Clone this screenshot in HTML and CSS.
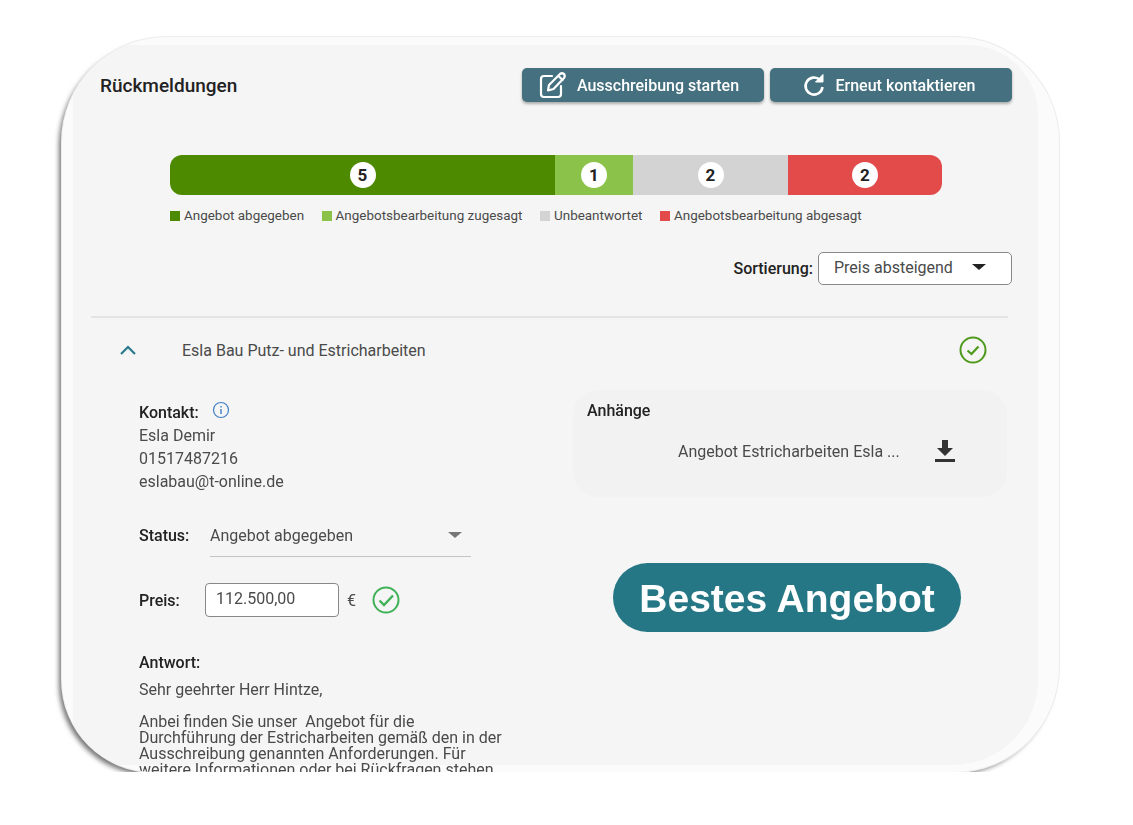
FILE: index.html
```html
<!DOCTYPE html>
<html>
  <head>
    <link rel="stylesheet" href="styles.css">
  </head>
  <body>
    <div class="card">
      <div class="panel">
        <div class="header">
          <h2>Rückmeldungen</h2>
          <div class="actions">
            <button class="action">
              <svg width="28" height="28" viewBox="0 0 28 28" fill="none" stroke="#fff" stroke-width="2.200" stroke-linecap="round" stroke-linejoin="round">
                <path d="M13 5H5Q2 5 2 8V23Q2 26 5 26H19Q22 26 22 23V15" />
                <path d="M9 19.500L10 14L21 3Q23 1.500 25 3Q26.500 5 25 7L14.500 18Z" />
                <path d="M19.500 5L23.500 9" />
              </svg>
              Ausschreibung starten
            </button>
            <button class="action action-retry">
              <svg width="22" height="24" viewBox="0 0 22 24" fill="none" stroke="#fff" stroke-width="2.600">
                <path d="M17 7A8.500 8.500 0 1 0 19.500 14" />
                <path d="M20 1.500V9H12.500Z" fill="#fff" stroke-width="1" />
              </svg>
              Erneut kontaktieren
            </button>
          </div>
        </div>

        <div class="bar">
          <div class="seg seg-green"><span>5</span></div>
          <div class="seg seg-light"><span>1</span></div>
          <div class="seg seg-grey"><span>2</span></div>
          <div class="seg seg-red"><span>2</span></div>
        </div>

        <div class="legend">
          <div class="legend-item"><i class="seg-green"></i>Angebot abgegeben</div>
          <div class="legend-item"><i class="seg-light"></i>Angebotsbearbeitung zugesagt</div>
          <div class="legend-item"><i class="seg-grey"></i>Unbeantwortet</div>
          <div class="legend-item"><i class="seg-red"></i>Angebotsbearbeitung abgesagt</div>
        </div>

        <div class="sort">
          <b>Sortierung:</b>
          <div class="sort-select">
            <span>Preis absteigend</span>
            <i class="caret caret-dark"></i>
          </div>
        </div>

        <hr class="divider">

        <div class="row">
          <svg class="chevron" width="18" height="10" viewBox="0 0 18 10" fill="none" stroke="#2b7a8c" stroke-width="2.200">
            <path d="M2 9L9 2L16 9" />
          </svg>
          <span class="row-name">Esla Bau Putz- und Estricharbeiten</span>
          <svg class="row-check" width="28" height="28" viewBox="0 0 28 28" fill="none" stroke="#4f9a1c" stroke-width="2">
            <circle cx="14" cy="14" r="12.500" />
            <path d="M8.500 14.500L12.500 18L19.500 10.500" stroke-width="2.200" />
          </svg>
        </div>

        <div class="details">
          <div class="left">
            <div class="contact">
              <div><b>Kontakt:</b>
                <svg class="info" width="18" height="18" viewBox="0 0 18 18" fill="none" stroke="#3f7fc4" stroke-width="1.200">
                  <circle cx="9" cy="9" r="7.500" />
                  <path d="M9 8V13" stroke-width="1.400" />
                  <path d="M9 5V6.400" stroke-width="1.400" />
                </svg>
              </div>
              <div>Esla Demir</div>
              <div>01517487216</div>
              <div>eslabau@t-online.de</div>
            </div>

            <div class="status">
              <b>Status:</b>
              <div class="status-select">
                <span>Angebot abgegeben</span>
                <i class="caret"></i>
              </div>
            </div>

            <div class="price">
              <b>Preis:</b>
              <div class="price-input">112.500,00</div>
              <span class="euro">€</span>
              <svg width="28" height="28" viewBox="0 0 28 28" fill="none" stroke="#3fb257" stroke-width="2">
                <circle cx="14" cy="14" r="12.500" />
                <path d="M7.500 14.500L12 19L21 9.500" stroke-width="2.400" />
              </svg>
            </div>

            <div class="answer">
              <b>Antwort:</b>
              <div>Sehr geehrter Herr Hintze,</div>
              <p>Anbei finden Sie unser&nbsp; Angebot für die<br>Durchführung der Estricharbeiten gemäß den in der<br>Ausschreibung genannten Anforderungen. Für<br>weitere Informationen oder bei Rückfragen stehen</p>
            </div>
          </div>

          <div class="right">
            <div class="attachments">
              <b>Anhänge</b>
              <div class="file">
                <span>Angebot Estricharbeiten Esla ...</span>
                <svg width="20" height="24" viewBox="0 0 20 24" fill="#333">
                  <path d="M7 1H13V9H18L10 17L2 9H7Z" />
                  <rect x="0" y="20" width="20" height="3" />
                </svg>
              </div>
            </div>
            <div class="best">Bestes Angebot</div>
          </div>
        </div>
      </div>
    </div>
  </body>
</html>
```

FILE: styles.css
```css
/* CSS styles */
body {
  margin: 0;
  background-color: #fff;
  font-family: Roboto, Arial, sans-serif;
  font-size: 16px;
  color: #4a4a4a;
  overflow: hidden;
}

b {
  font-weight: 500;
  color: #222;
}

.card {
  box-sizing: border-box;
  width: 997px;
  height: 735px;
  margin: 37px 0 0 62px;
  padding: 8px 21px 7px 11px;
  background-color: #fbfbfb;
  border-radius: 105px 105px 105px 92px;
  overflow: hidden;
  box-shadow: 0 0 0 1px #ececec, -4px 4px 5px -1px rgba(0, 0, 0, 0.55);
}

.panel {
  box-sizing: border-box;
  height: 100%;
  padding: 23px 26px 0 27px;
  background-color: #f5f5f5;
  border-radius: 0 70px 85px 0;
  filter: blur(0.7px);
}

.header {
  display: flex;
  justify-content: space-between;
  align-items: center;
}

h2 {
  margin: 0;
  font-size: 19px;
  font-weight: 500;
  color: #222;
}

.actions {
  display: flex;
  gap: 6px;
}

.action {
  display: flex;
  justify-content: center;
  align-items: center;
  gap: 10px;
  width: 242px;
  height: 34px;
  padding: 0 8px 0 0;
  border: none;
  border-radius: 5px;
  background-color: #44707f;
  box-shadow: 0 2px 3px rgba(0, 0, 0, 0.3);
  color: #fff;
  font-family: Roboto, Arial, sans-serif;
  font-size: 16px;
  font-weight: 500;
}

.action-retry {
  gap: 11px;
  padding-right: 4px;
}

.bar {
  display: flex;
  width: 772px;
  height: 40px;
  margin: 53px 0 0 70px;
  border-radius: 12px;
  overflow: hidden;
}

.seg {
  display: flex;
  justify-content: center;
  align-items: center;
}

.seg:nth-child(1) { width: 385px; }
.seg:nth-child(2) { width: 78px; }
.seg:nth-child(3) { width: 155px; }
.seg:nth-child(4) { width: 154px; }

.seg span {
  display: flex;
  justify-content: center;
  align-items: center;
  width: 26px;
  height: 26px;
  border-radius: 50%;
  background-color: #fff;
  color: #222;
  font-size: 17px;
  font-weight: 700;
}

.seg-green { background-color: #4d8a00; }
.seg-light { background-color: #8bc34a; }
.seg-grey { background-color: #d3d3d3; }
.seg-red { background-color: #e34a4a; }

.legend {
  display: flex;
  gap: 17.500px;
  margin: 13px 0 0 70px;
  font-size: 13.450px;
  line-height: 16px;
}

.legend-item {
  display: flex;
  align-items: center;
  gap: 4px;
}

.legend-item i {
  width: 10px;
  height: 10px;
}

.sort {
  display: flex;
  justify-content: flex-end;
  align-items: center;
  gap: 5px;
  margin-top: 28px;
}

.sort-select {
  box-sizing: border-box;
  display: flex;
  align-items: center;
  justify-content: space-between;
  width: 194px;
  height: 33px;
  padding: 0 25px 3px 15px;
  background-color: #fff;
  border: 1px solid #888;
  border-radius: 5px;
}

.caret {
  width: 0;
  height: 0;
  border-left: 7px solid transparent;
  border-right: 7px solid transparent;
  border-top: 6px solid #777;
}

.caret-dark {
  border-top-color: #222;
}

.divider {
  height: 2px;
  margin: 31px 4px 0 -9px;
  border: none;
  background-color: #e4e4e4;
}

.row {
  display: flex;
  align-items: center;
  height: 34px;
  margin-top: 15px;
}

.chevron {
  margin-left: 19px;
}

.row-name {
  margin-left: 45px;
}

.row-check {
  margin-left: auto;
  margin-right: 25px;
}

.details {
  display: flex;
  margin-top: 23px;
}

.left {
  box-sizing: border-box;
  width: 473px;
  padding: 11px 0 0 39px;
}

.contact {
  line-height: 23px;
}

.info {
  margin-left: 9px;
  vertical-align: -1px;
}

.status {
  display: flex;
  align-items: center;
  margin-top: 21px;
}

.status b {
  width: 71px;
}

.status-select {
  box-sizing: border-box;
  display: flex;
  justify-content: space-between;
  align-items: center;
  width: 261px;
  height: 43px;
  padding-right: 9px;
  border-bottom: 1px solid #c4c4c4;
}

.price {
  display: flex;
  align-items: center;
  margin-top: 26px;
}

.price b {
  width: 66px;
}

.price-input {
  box-sizing: border-box;
  width: 134px;
  height: 34px;
  padding: 5px 10px;
  background-color: #fff;
  border: 1px solid #888;
  border-radius: 4px;
}

.euro {
  margin: 0 16px 0 8px;
}

.answer {
  margin-top: 34px;
  line-height: 23px;
}

.answer b {
  display: block;
  margin-bottom: 4px;
}

.answer p {
  margin: 13px 0 0;
  line-height: 16px;
  white-space: nowrap;
}

.attachments {
  box-sizing: border-box;
  width: 434px;
  height: 107px;
  padding: 11px 14px;
  background-color: #f2f2f2;
  border-radius: 25px;
}

.attachments b {
  display: block;
}

.file {
  display: flex;
  align-items: center;
  gap: 35px;
  margin: 19px 0 0 91px;
}

.best {
  width: 348px;
  height: 69px;
  margin: 66px 0 0 40px;
  background-color: #267785;
  border-radius: 35px;
  color: #fff;
  font-family: "Liberation Sans", Arial, sans-serif;
  font-size: 39px;
  font-weight: 700;
  line-height: 71px;
  text-align: center;
}
```
